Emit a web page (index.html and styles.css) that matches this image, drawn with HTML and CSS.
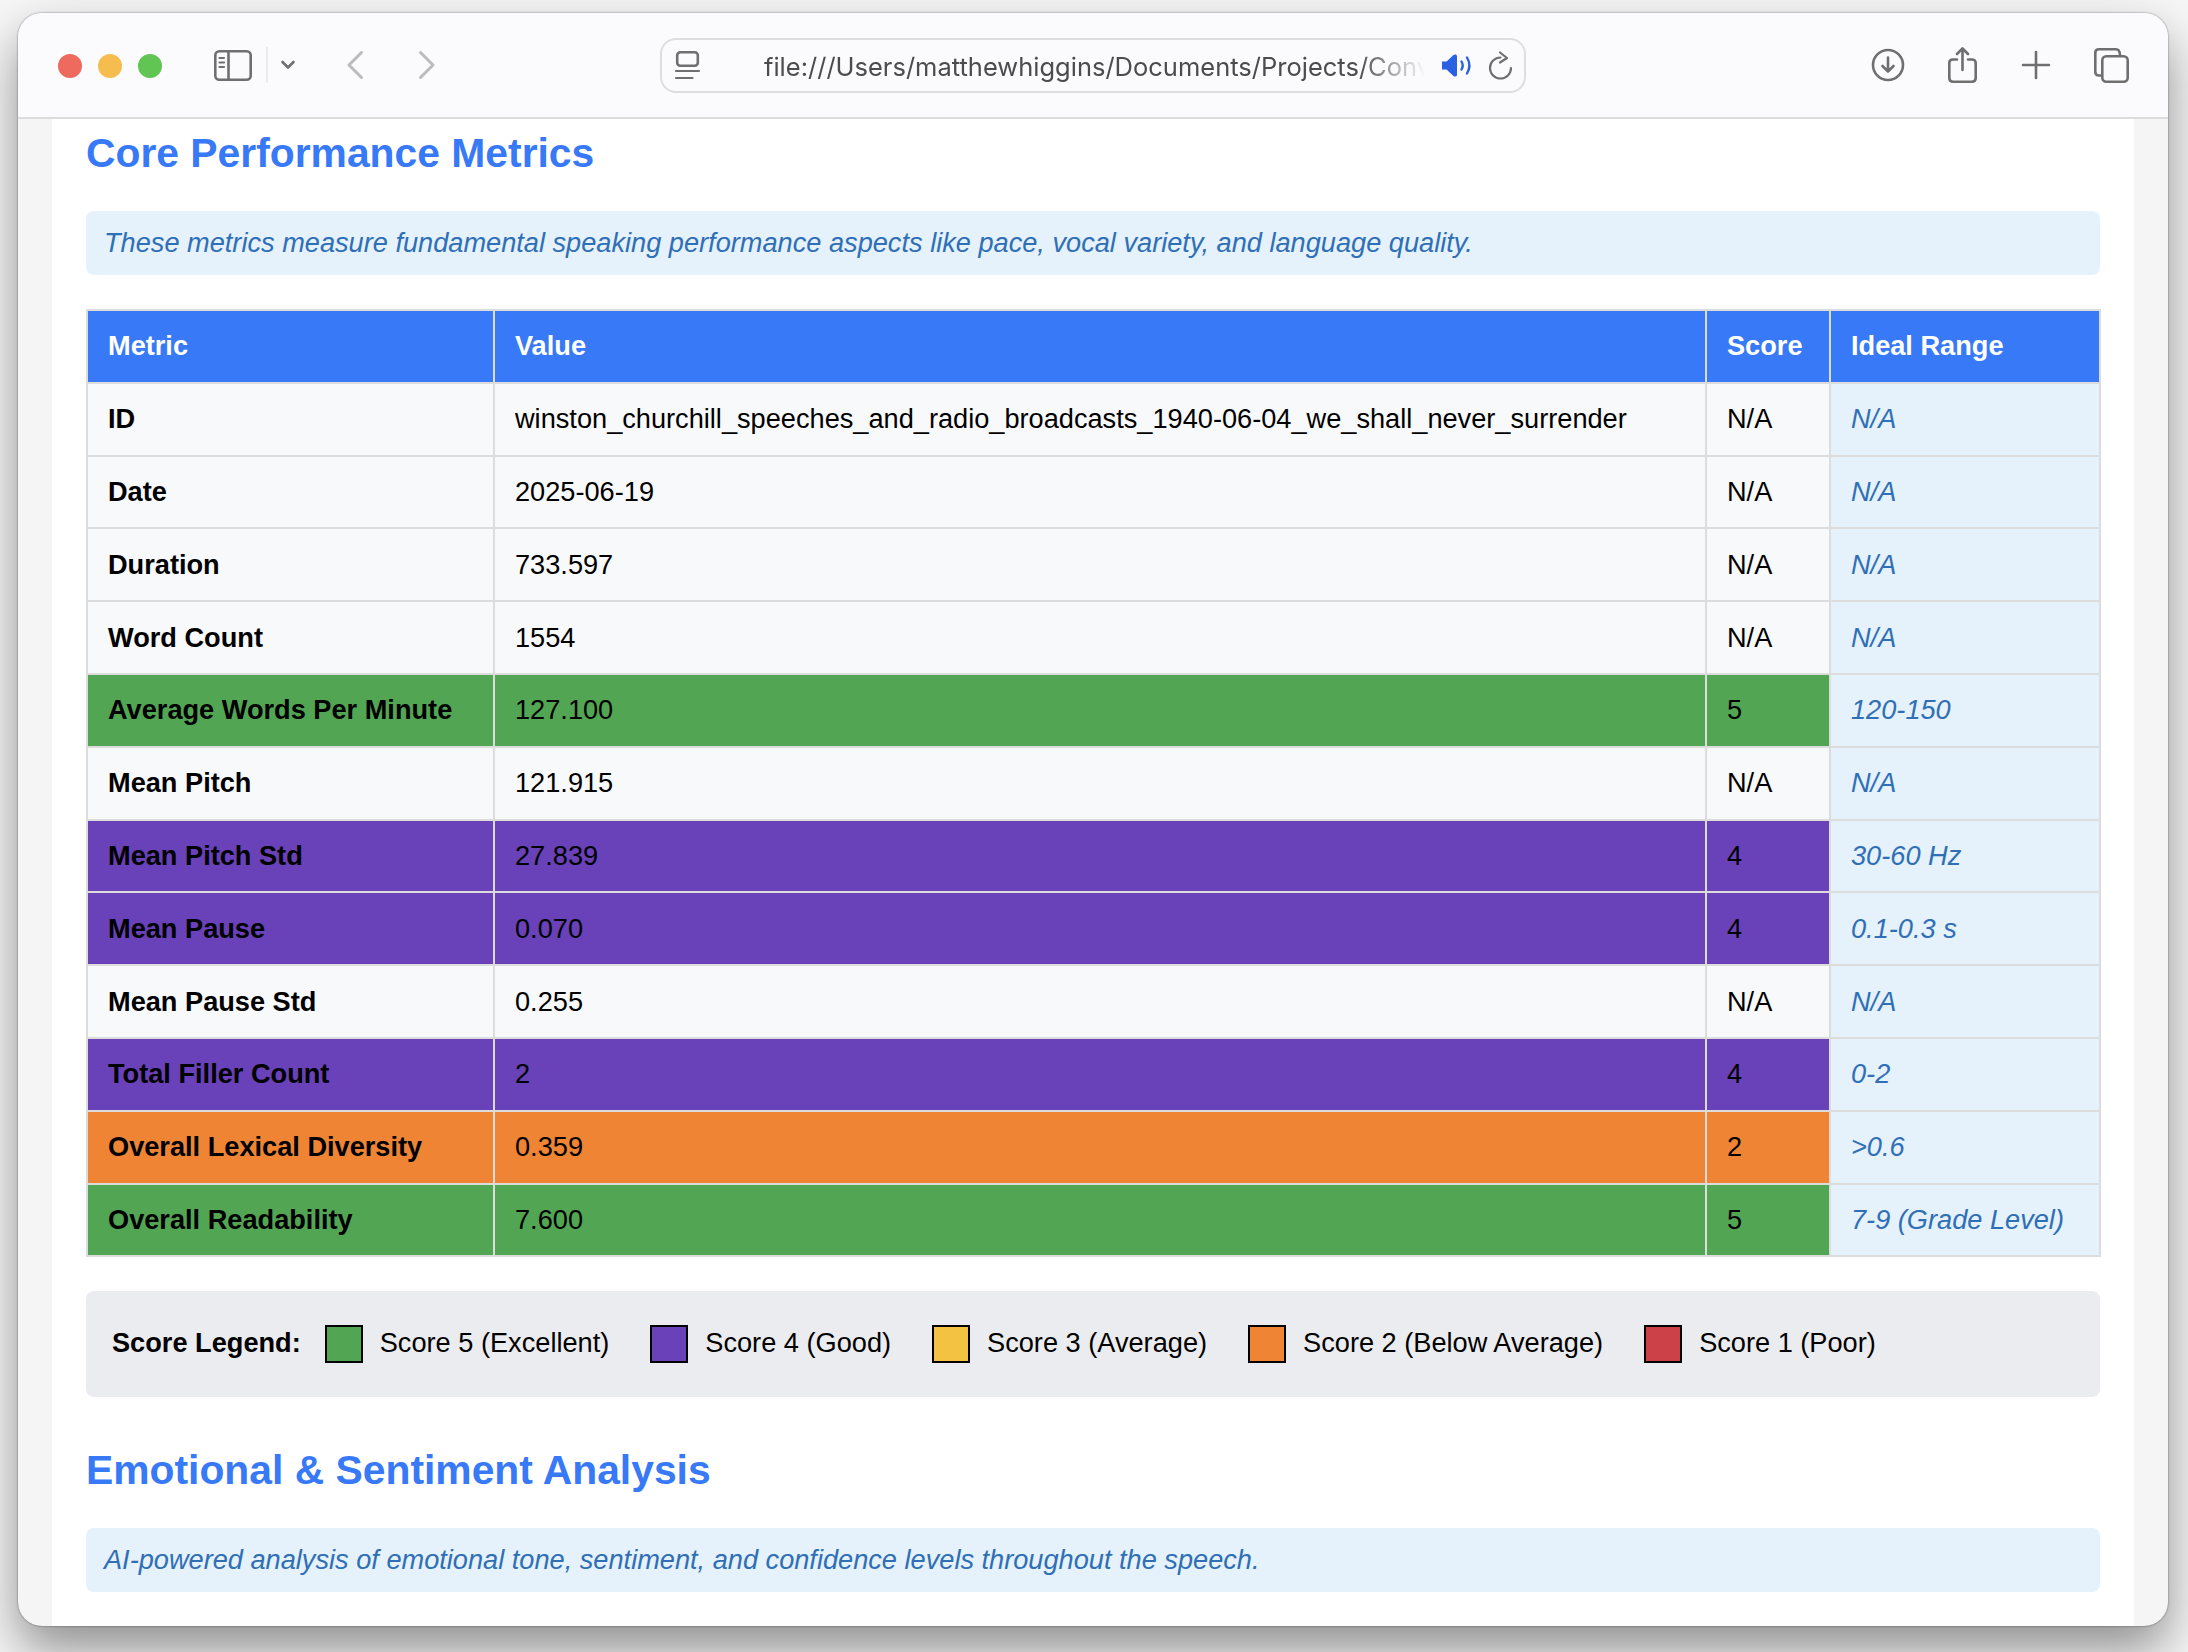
FILE: index.html
```html
<!DOCTYPE html>
<html lang="en">
<head>
<meta charset="utf-8">
<title>Core Performance Metrics</title>
<link rel="stylesheet" href="styles.css">
</head>
<body>
<div class="window">
  <header class="toolbar">
    <div class="lights">
      <span class="light red"></span><span class="light yellow"></span><span class="light green"></span>
    </div>
    <svg class="ic sidebar" viewBox="0 0 38 31"><rect x="1.3" y="1.3" width="35.4" height="28.4" rx="4" class="st"/><path d="M14.5 1.5V29.5" class="st"/><path d="M5.5 8H10M5.5 12.5H10M5.5 17H10" class="st thin"/></svg>
    <span class="divider"></span>
    <svg class="ic chev" viewBox="0 0 14 10"><path d="M1.5 2L7 7.5L12.5 2" class="st"/></svg>
    <svg class="ic back" viewBox="0 0 16 28"><path d="M14.5 1.5L2 14L14.5 26.5" class="st light-st"/></svg>
    <svg class="ic forward" viewBox="0 0 16 28"><path d="M1.5 1.5L14 14L1.5 26.5" class="st light-st"/></svg>
    <div class="urlbar">
      <svg class="ic page-ic" viewBox="0 0 23 29"><rect x="1.2" y="1.2" width="20.6" height="13.6" rx="3" class="st"/><path d="M0 20H23" class="st thin"/><path d="M0 27H16.5" class="st thin"/></svg>
      <span class="url">file:///Users/matthewhiggins/Documents/Projects/Conversation</span>
      <svg class="ic speaker" viewBox="0 0 29 23"><path d="M0 7.5H4.5L11.5 1C13 0 15 .2 15 2.5V20.5C15 22.8 13 23 11.5 22L4.5 15.5H0Z" class="blue-fill"/><path d="M19.500 7.500C21 10 21 13 19.500 15.500" class="blue-st"/><path d="M25 3.500C28 8.500 28 14.500 25 19.500" class="blue-st"/></svg>
      <svg class="ic reload" viewBox="0 0 23 27"><path d="M11.500 5.500A10.500 10.500 0 1 0 22 16" class="st thin"/><path d="M11 .5L18 6L11 10.500" class="st thin"/></svg>
    </div>
    <svg class="ic download" viewBox="0 0 32 32"><circle cx="16" cy="16" r="15" class="st"/><path d="M16 8.500V22.500M10.500 17L16 22.500L21.500 17" class="st"/></svg>
    <svg class="ic share" viewBox="0 0 29 36"><path d="M9 12.500H5C2.800 12.500 1.300 14 1.300 16V31C1.300 33.200 2.800 34.700 5 34.700H24C26.200 34.700 27.700 33.200 27.700 31V16C27.700 14 26.200 12.500 24 12.500H20" class="st"/><path d="M14.500 23V2M9 7L14.500 1.500L20 7" class="st"/></svg>
    <svg class="ic plus" viewBox="0 0 26 26"><path d="M13 0V26M0 13H26" class="st"/></svg>
    <svg class="ic tabs" viewBox="0 0 35 35"><path d="M7 27.500H5C2.800 27.500 1.300 26 1.300 24V5C1.300 2.800 2.800 1.300 5 1.300H22C24.500 1.300 25.800 2.800 26 7" class="st"/><rect x="8.300" y="8.300" width="25.400" height="25.400" rx="4" class="st"/></svg>
  </header>
  <div class="viewport">
    <main class="page">
      <h2>Core Performance Metrics</h2>
      <p class="note">These metrics measure fundamental speaking performance aspects like pace, vocal variety, and language quality.</p>
      <table>
        <colgroup><col class="c1"><col class="c2"><col class="c3"><col class="c4"></colgroup>
        <thead>
          <tr><th>Metric</th><th>Value</th><th>Score</th><th>Ideal Range</th></tr>
        </thead>
        <tbody>
          <tr><td class="m">ID</td><td>winston_churchill_speeches_and_radio_broadcasts_1940-06-04_we_shall_never_surrender</td><td>N/A</td><td class="ideal">N/A</td></tr>
          <tr><td class="m">Date</td><td>2025-06-19</td><td>N/A</td><td class="ideal">N/A</td></tr>
          <tr><td class="m">Duration</td><td>733.597</td><td>N/A</td><td class="ideal">N/A</td></tr>
          <tr><td class="m">Word Count</td><td>1554</td><td>N/A</td><td class="ideal">N/A</td></tr>
          <tr class="s5"><td class="m">Average Words Per Minute</td><td>127.100</td><td>5</td><td class="ideal">120-150</td></tr>
          <tr><td class="m">Mean Pitch</td><td>121.915</td><td>N/A</td><td class="ideal">N/A</td></tr>
          <tr class="s4"><td class="m">Mean Pitch Std</td><td>27.839</td><td>4</td><td class="ideal">30-60 Hz</td></tr>
          <tr class="s4"><td class="m">Mean Pause</td><td>0.070</td><td>4</td><td class="ideal">0.1-0.3 s</td></tr>
          <tr><td class="m">Mean Pause Std</td><td>0.255</td><td>N/A</td><td class="ideal">N/A</td></tr>
          <tr class="s4"><td class="m">Total Filler Count</td><td>2</td><td>4</td><td class="ideal">0-2</td></tr>
          <tr class="s2"><td class="m">Overall Lexical Diversity</td><td>0.359</td><td>2</td><td class="ideal">&gt;0.6</td></tr>
          <tr class="s5"><td class="m">Overall Readability</td><td>7.600</td><td>5</td><td class="ideal">7-9 (Grade Level)</td></tr>
        </tbody>
      </table>
      <div class="legend">
        <strong class="legend-title">Score Legend:</strong>
        <span class="item"><i class="swatch bg5"></i><span class="lbl">Score 5 (Excellent)</span></span>
        <span class="item"><i class="swatch bg4"></i><span class="lbl">Score 4 (Good)</span></span>
        <span class="item"><i class="swatch bg3"></i><span class="lbl">Score 3 (Average)</span></span>
        <span class="item"><i class="swatch bg2"></i><span class="lbl">Score 2 (Below Average)</span></span>
        <span class="item"><i class="swatch bg1"></i><span class="lbl">Score 1 (Poor)</span></span>
      </div>
      <h2 class="second">Emotional &amp; Sentiment Analysis</h2>
      <p class="note">AI-powered analysis of emotional tone, sentiment, and confidence levels throughout the speech.</p>
    </main>
  </div>
</div>
</body>
</html>
```
FILE: styles.css
```css
* { box-sizing: border-box; }
html, body { margin: 0; height: 100%; }
body {
  width: 2188px;
  height: 1652px;
  padding: 13px 20px 26px 18px;
  background: #f6f6f6;
  overflow: hidden;
  font-family: "Liberation Sans", Arial, sans-serif;
  color: #000;
}
.window {
  width: 2150px;
  height: 1613px;
  display: flex;
  flex-direction: column;
  border-radius: 24px;
  overflow: hidden;
  background: #f5f5f5;
  box-shadow: 0 0 2px rgba(0,0,0,.55), 0 24px 50px rgba(0,0,0,.42);
}
.toolbar {
  flex: none;
  height: 106px;
  display: flex;
  align-items: center;
  padding-left: 40px;
  background: #fbfbfd;
  border-bottom: 2px solid #dcdcdc;
}
.lights { display: flex; gap: 16px; margin-top: 2px; }
.light { width: 24px; height: 24px; border-radius: 50%; }
.light.red { background: #ee6a5f; }
.light.yellow { background: #f5bd4f; }
.light.green { background: #61c554; }
.ic { display: block; flex: none; overflow: visible; }
.st { fill: none; stroke: #6f6f6f; stroke-width: 2.6; stroke-linecap: round; stroke-linejoin: round; }
.st.thin { stroke-width: 2.2; }
.st.light-st { stroke: #bcbcbc; stroke-width: 3; }
.blue-fill { fill: #2a60e2; }
.blue-st { fill: none; stroke: #2a60e2; stroke-width: 2.4; stroke-linecap: round; }
.sidebar { width: 38px; height: 31px; margin-left: 52px; }
.divider { width: 2px; height: 36px; margin-left: 14px; background: #ececee; }
.chev { width: 14px; height: 10px; margin-left: 13px; }
.back { width: 16px; height: 28px; margin-left: 52px; }
.forward { width: 16px; height: 28px; margin-left: 56px; }
.urlbar {
  width: 866px;
  height: 55px;
  margin-left: 225px;
  padding-left: 14px;
  display: flex;
  align-items: center;
  border: 2px solid #dedede;
  border-radius: 16px;
}
.page-ic { width: 23px; height: 29px; }
.url {
  width: 661px;
  margin-left: 65px;
  margin-top: 2px;
  overflow: hidden;
  white-space: nowrap;
  font-family: Inter, "Liberation Sans", sans-serif;
  font-size: 25.5px;
  color: #4c4c4c;
  -webkit-mask-image: linear-gradient(to right, #000 90%, transparent);
  mask-image: linear-gradient(to right, #000 90%, transparent);
}
.speaker { width: 29px; height: 23px; margin-left: 17px; }
.reload { width: 23px; height: 27px; margin-left: 18px; }
.download { width: 32px; height: 32px; margin-left: 346px; }
.share { width: 29px; height: 36px; margin-left: 44px; }
.plus { width: 26px; height: 26px; margin-left: 46px; }
.tabs { width: 35px; height: 35px; margin-left: 45px; }

.viewport { flex: 1; min-height: 0; padding: 0 34px; }
.page { height: 100%; padding: 9px 34px 0 34px; background: #fff; overflow: hidden; }
h2 {
  margin: 0 0 33px;
  font-size: 40.85px;
  line-height: 50px;
  font-weight: 700;
  color: #3779f6;
}
h2.second { margin: 48px 0 33px; }
.note {
  margin: 0 0 34px;
  height: 64px;
  padding: 0 18px;
  display: flex;
  align-items: center;
  background: #e5f1fb;
  border-radius: 8px;
  font-size: 27.18px;
  font-style: italic;
  color: #2f6fb5;
}
table {
  width: 2013px;
  table-layout: fixed;
  border-collapse: collapse;
  font-size: 27.18px;
}
.c1 { width: 407px; }
.c2 { width: 1212px; }
.c3 { width: 124px; }
.c4 { width: 270px; }
tr { height: 72.8px; }
th, td {
  padding: 0 20px;
  border: 2px solid #dcdcdc;
  text-align: left;
  background: #f8f9fb;
}
th { background: #3779f6; color: #fff; font-weight: 700; }
td.m { font-weight: 700; }
td.ideal { background: #e5f1fb; color: #2f6fb5; font-style: italic; }
.s5 td:not(.ideal) { background: #52a653; }
.s4 td:not(.ideal) { background: #6941b8; }
.s2 td:not(.ideal) { background: #ef8434; }
.legend {
  margin-top: 34px;
  height: 106px;
  padding: 0 26px;
  display: flex;
  align-items: center;
  background: #ebecef;
  border-radius: 8px;
  font-size: 27.18px;
}
.legend-title { margin: 0 24px 3px 0; }
.item { display: flex; align-items: center; margin-right: 41px; }
.swatch { width: 38px; height: 38px; margin-right: 17px; border: 2.5px solid #000; }
.lbl { margin-bottom: 3px; }
.bg5 { background: #52a653; }
.bg4 { background: #6941b8; }
.bg3 { background: #f4c242; }
.bg2 { background: #ef8434; }
.bg1 { background: #cc4148; }
```
